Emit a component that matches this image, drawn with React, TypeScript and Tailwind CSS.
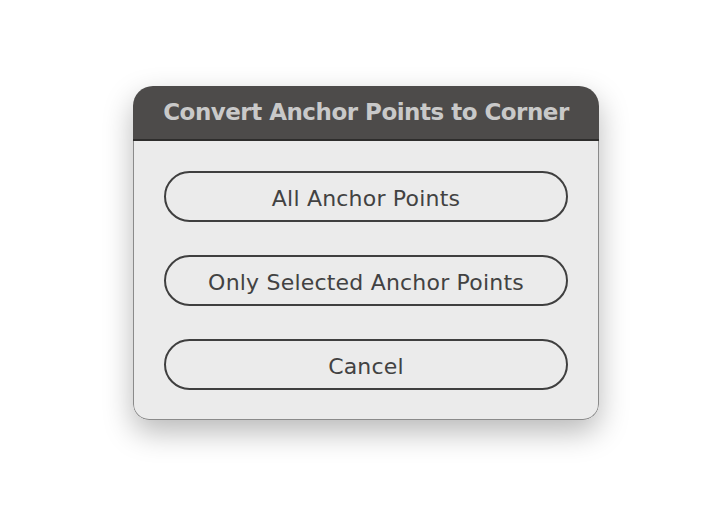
import React from 'react'

const options = ['All Anchor Points', 'Only Selected Anchor Points', 'Cancel']

export default function App() {
  return (
    <div className="w-[728px] h-[506px] bg-white flex items-center justify-center">
      <div
        className="ml-1 w-[466px] h-[334px] flex flex-col rounded-t-[20px] rounded-b-[16px] overflow-hidden shadow-[0_12px_30px_rgba(0,0,0,0.28)]"
        style={{ fontFamily: '"DejaVu Sans", "Open Sans", sans-serif' }}
      >
        {/* Title bar */}
        <div className="h-[55px] shrink-0 bg-[#4d4b4a] border-b-2 border-[#2e2d2c] flex items-center justify-center pb-[1px]">
          <h1 className="text-[23px] font-bold text-[#c9c9c9] tracking-[-0.5px]">
            Convert Anchor Points to Corner
          </h1>
        </div>

        {/* Buttons */}
        <div className="flex-1 bg-[#ebebeb] border-x border-b border-[#8a8a8a] rounded-b-[16px] px-[30px] pt-[30px] flex flex-col gap-[33px]">
          {options.map((label) => (
            <button
              key={label}
              className="h-[51px] w-full rounded-full border-2 border-[#3f3f3f] bg-[#ebebeb] pt-1 text-[22px] text-[#424242] tracking-[0.2px] flex items-center justify-center"
            >
              {label}
            </button>
          ))}
        </div>
      </div>
    </div>
  )
}
